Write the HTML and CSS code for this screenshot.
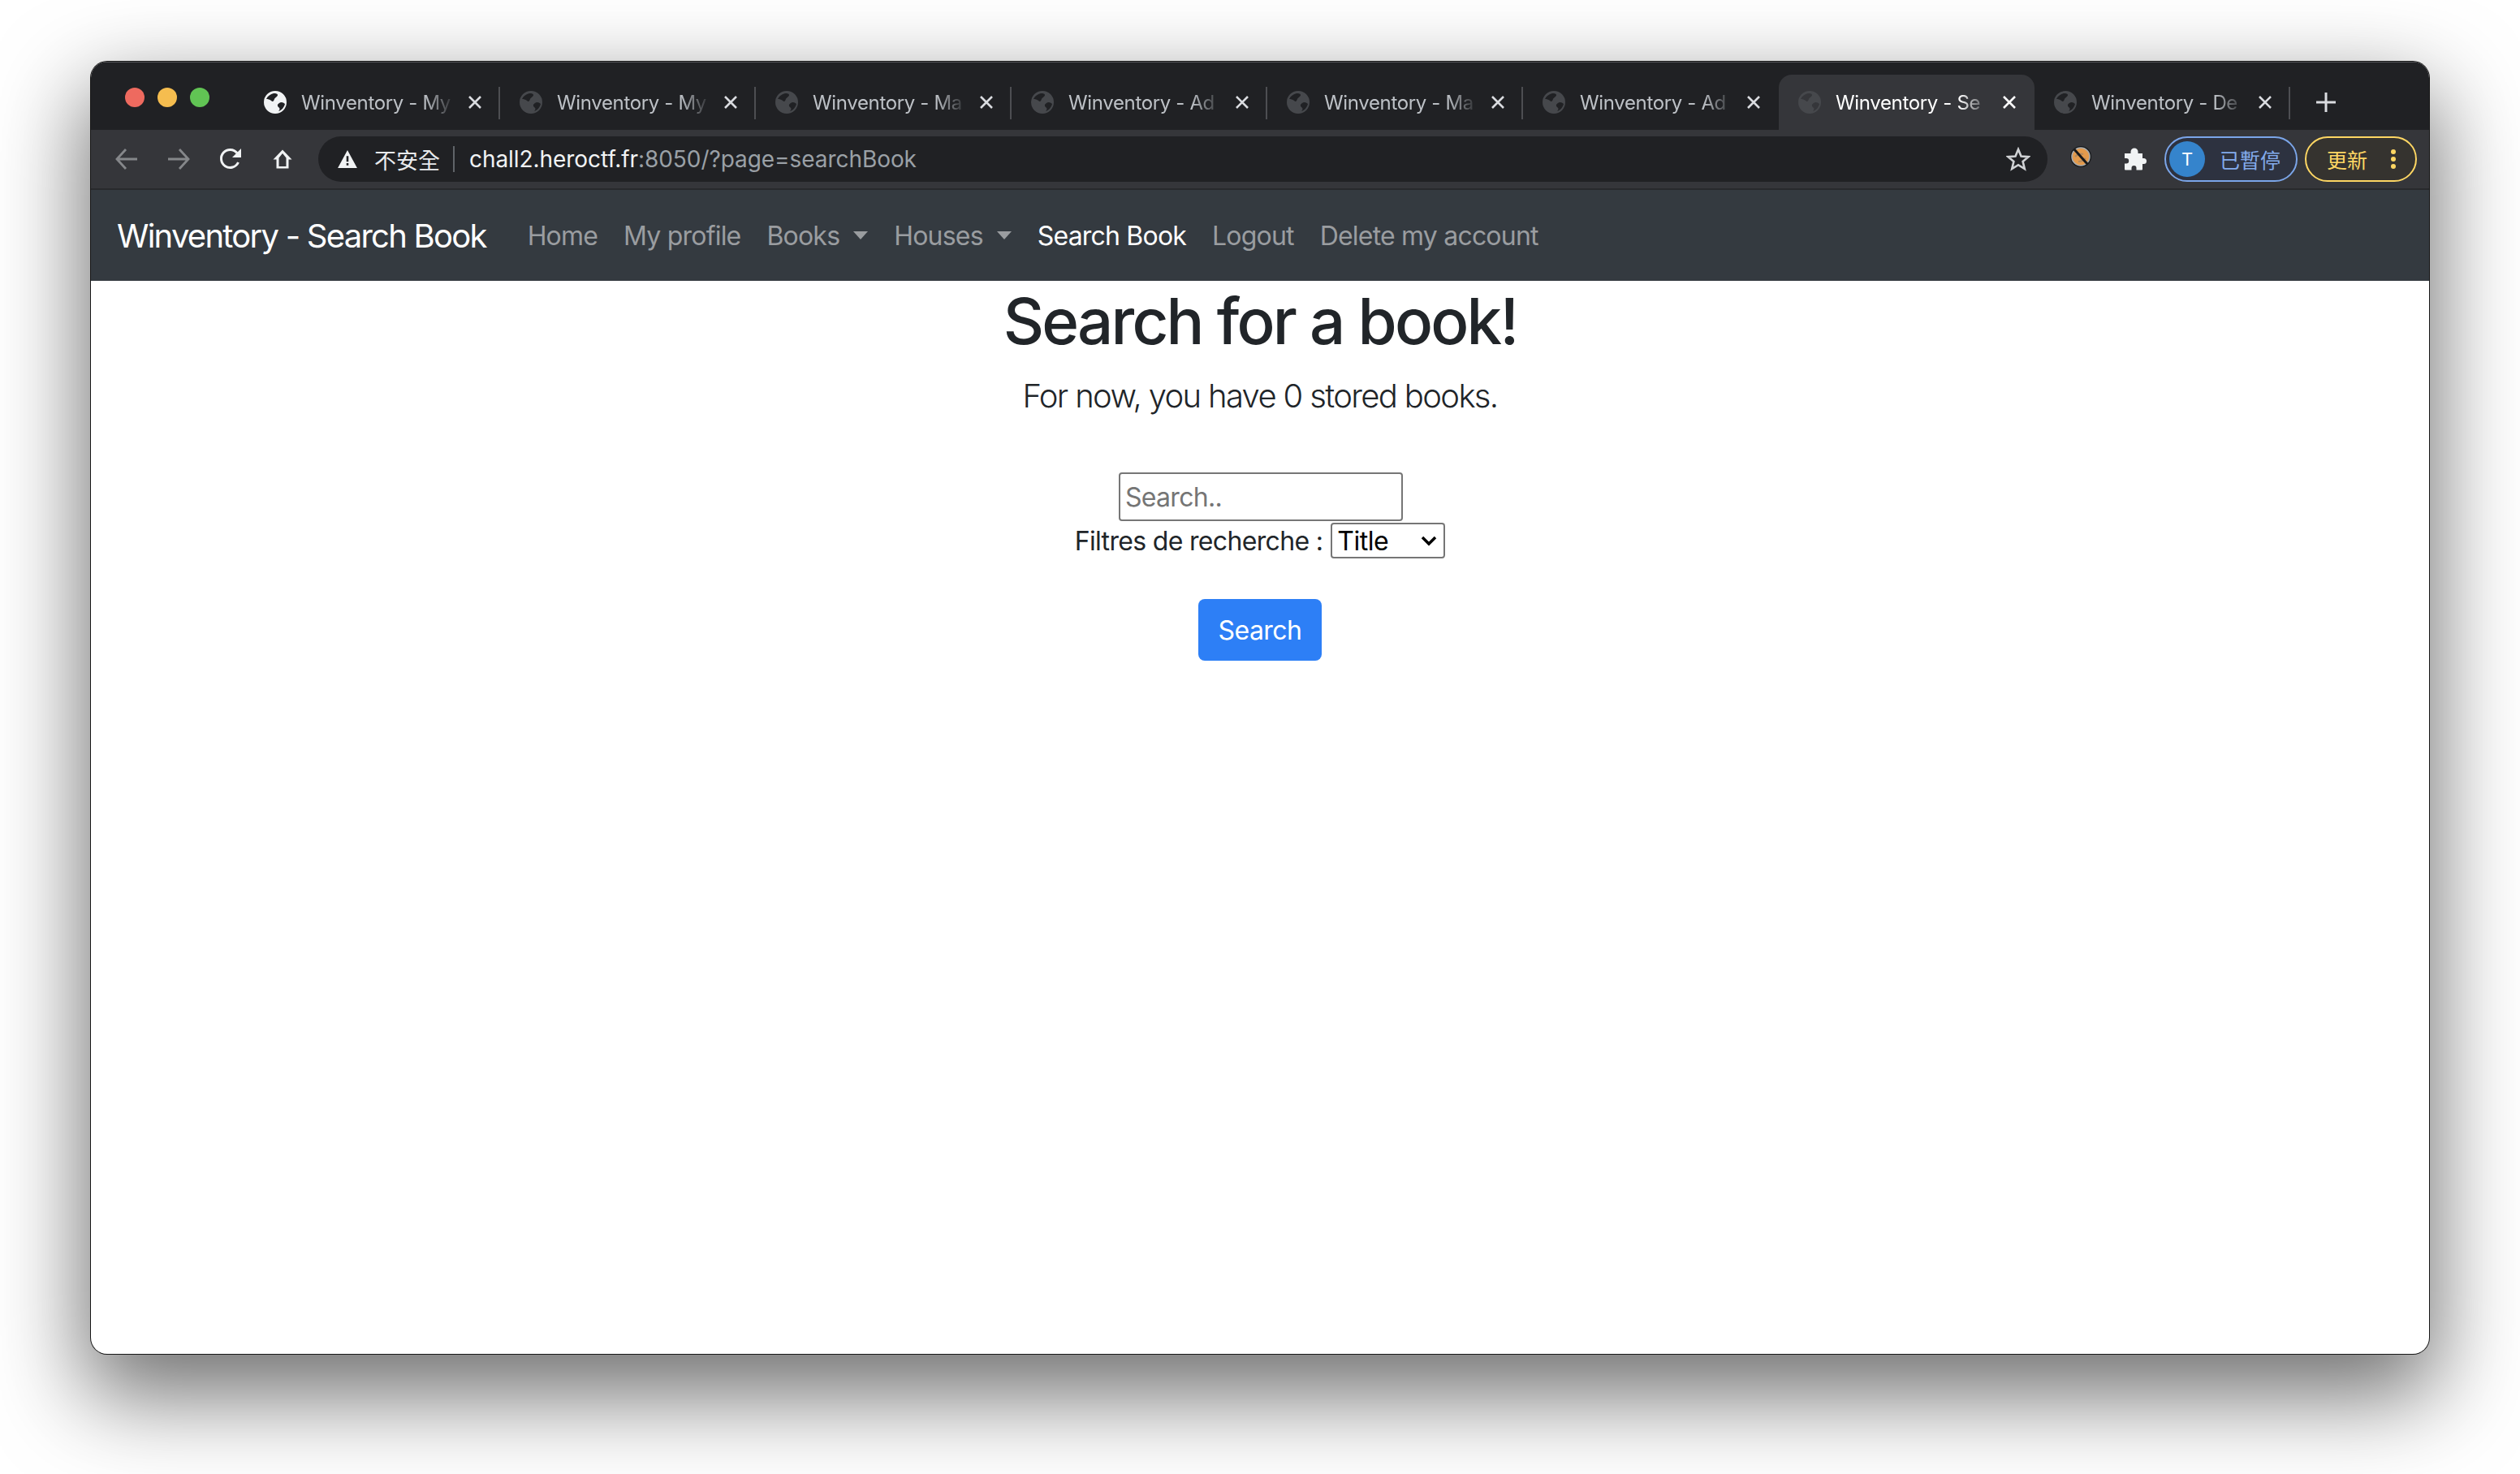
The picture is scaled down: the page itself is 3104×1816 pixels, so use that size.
FILE: index.html
```html
<!DOCTYPE html>
<html lang="en">

<head>
    <meta charset="UTF-8">
    <title>Winventory - Search Book</title>
    <link rel="stylesheet" href="styles.css">
</head>

<body>
    <svg class="defs" width="0" height="0">
        <symbol id="globe" viewBox="0 0 28 28">
            <path fill-rule="evenodd" d="M14 0a14 14 0 1 1 0 28a14 14 0 0 1 0-28zM3 10C5 6 8 4 12 3C15 3 17 3.500 17 5C17 7 14 8 13 10C12 13 11 14 9 12C7 10.500 5 10 3 10zM26 16C24 14 21 13 19 15C17 16 16 18 18 20C20 21 20 23 18 25C22 24 25 20 26 16z"/>
        </symbol>
        <symbol id="close" viewBox="0 0 16 16">
            <path d="M1 1L15 15M15 1L1 15" fill="none" stroke="currentColor" stroke-width="2.600"/>
        </symbol>
    </svg>

    <div class="window">
        <div class="tabstrip">
            <div class="lights">
                <span class="light red"></span>
                <span class="light yellow"></span>
                <span class="light green"></span>
            </div>
            <div class="tab first">
                <svg class="favicon"><use href="#globe"/></svg>
                <span class="tab-title">Winventory - My</span>
                <svg class="tab-close"><use href="#close"/></svg>
            </div>
            <div class="tab">
                <svg class="favicon"><use href="#globe"/></svg>
                <span class="tab-title">Winventory - My</span>
                <svg class="tab-close"><use href="#close"/></svg>
            </div>
            <div class="tab">
                <svg class="favicon"><use href="#globe"/></svg>
                <span class="tab-title">Winventory - Ma</span>
                <svg class="tab-close"><use href="#close"/></svg>
            </div>
            <div class="tab">
                <svg class="favicon"><use href="#globe"/></svg>
                <span class="tab-title">Winventory - Ad</span>
                <svg class="tab-close"><use href="#close"/></svg>
            </div>
            <div class="tab">
                <svg class="favicon"><use href="#globe"/></svg>
                <span class="tab-title">Winventory - Ma</span>
                <svg class="tab-close"><use href="#close"/></svg>
            </div>
            <div class="tab before-active">
                <svg class="favicon"><use href="#globe"/></svg>
                <span class="tab-title">Winventory - Ad</span>
                <svg class="tab-close"><use href="#close"/></svg>
            </div>
            <div class="tab active">
                <svg class="favicon"><use href="#globe"/></svg>
                <span class="tab-title">Winventory - Se</span>
                <svg class="tab-close"><use href="#close"/></svg>
            </div>
            <div class="tab">
                <svg class="favicon"><use href="#globe"/></svg>
                <span class="tab-title">Winventory - De</span>
                <svg class="tab-close"><use href="#close"/></svg>
            </div>
            <svg class="new-tab" viewBox="0 0 24 24">
                <path d="M12 0V24M0 12H24" fill="none" stroke="currentColor" stroke-width="3"/>
            </svg>
        </div>

        <div class="toolbar">
            <svg class="tool dim" viewBox="0 0 28 28">
                <path d="M27 14H3M13 2L2 14L13 26" fill="none" stroke="currentColor" stroke-width="2.800"/>
            </svg>
            <svg class="tool dim" viewBox="0 0 28 28">
                <path d="M1 14H25M15 2L26 14L15 26" fill="none" stroke="currentColor" stroke-width="2.800"/>
            </svg>
            <svg class="tool" viewBox="0 0 28 28">
                <path d="M23.500 18a11 11 0 1 1-1.500-11.500" fill="none" stroke="currentColor" stroke-width="3"/>
                <path d="M27 1V12H16z" fill="currentColor"/>
            </svg>
            <svg class="tool" viewBox="0 0 28 28">
                <path d="M14 2.500L2.500 14.500H6.500V25.500H21.500V14.500H25.500zM9.500 23V12.500L14 7L18.500 12.500V23z" fill="currentColor" fill-rule="evenodd"/>
            </svg>

            <div class="omnibox">
                <svg class="warn" viewBox="0 0 26 24">
                    <path fill-rule="evenodd" d="M13 0L26 24H0zM11.600 8V15.500H14.400V8zM11.600 17.500V20.500H14.400V17.500z" fill="currentColor"/>
                </svg>
                <span class="insecure">不安全</span>
                <span class="omni-sep"></span>
                <span class="url">chall2.heroctf.fr<span class="url-rest">:8050/?page=searchBook</span></span>
                <svg class="star" viewBox="0 0 30 30">
                    <path d="M15 3L18.500 11.500L27.500 12.200L20.600 18L22.800 27L15 22.200L7.200 27L9.400 18L2.500 12.200L11.500 11.500z" fill="none" stroke="currentColor" stroke-width="2.600"/>
                </svg>
            </div>

            <svg class="ext-icon" viewBox="0 0 28 28">
                <circle cx="14" cy="14" r="13" fill="#16181a"/>
                <circle cx="14" cy="14" r="11" fill="#e39a4c" stroke="#a9acae" stroke-width="1.500"/>
                <path d="M7 14c3-3 7-4 10-3M11 20c3 0 6-1 9-4" fill="none" stroke="#b08a60" stroke-width="2"/>
                <path d="M6 5L22 23" stroke="#16181a" stroke-width="3"/>
            </svg>
            <svg class="puzzle" viewBox="0 0 28 28">
                <path d="M1 7H8.500V5a4.500 4.500 0 0 1 9 0V7H23V13H24.500a3.500 3.500 0 0 1 0 7H23V26.500a1 1 0 0 1-1 1H15.500V25a3 3 0 0 0-6 0V27.500H2a1 1 0 0 1-1-1V19.500H3a3.200 3.200 0 0 0 0-6.400H1z" fill="currentColor"/>
            </svg>
            <div class="profile">
                <span class="avatar">T</span>
                <span class="profile-label">已暫停</span>
            </div>
            <div class="update">
                <span>更新</span>
                <span class="dots"><i></i><i></i><i></i></span>
            </div>
        </div>

        <nav class="navbar">
            <a class="brand">Winventory - Search Book</a>
            <a class="nav-link">Home</a>
            <a class="nav-link">My profile</a>
            <a class="nav-link caret">Books</a>
            <a class="nav-link caret">Houses</a>
            <a class="nav-link current">Search Book</a>
            <a class="nav-link">Logout</a>
            <a class="nav-link">Delete my account</a>
        </nav>

        <main class="page">
            <h1>Search for a book!</h1>
            <p class="lead">For now, you have 0 stored books.</p>
            <form class="search-form">
                <input class="search-input" type="text" placeholder="Search..">
                <div class="filter-row">
                    <label for="filter">Filtres de recherche :</label>
                    <select id="filter" class="filter">
                        <option>Title</option>
                        <option>Author</option>
                    </select>
                </div>
                <button type="button" class="btn">Search</button>
            </form>
        </main>
    </div>
</body>

</html>
```

FILE: styles.css
```css
html,
body {
    margin: 0;
    height: 100%;
    background: #fff;
    overflow: hidden;
}

body {
    padding: 76px 112px 0;
    box-sizing: border-box;
    font-family: Inter, "Noto Sans CJK TC", sans-serif;
}

.defs {
    position: absolute;
}

.window {
    width: 2880px;
    height: 1592px;
    border-radius: 20px;
    overflow: hidden;
    background: #fff;
    box-shadow: 0 0 0 1px #161616, 0 44px 110px 8px rgba(0, 0, 0, .56);
}

/* tab strip */
.tabstrip {
    height: 84px;
    box-sizing: border-box;
    background: #202124;
    border-top: 1px solid #55565a;
    display: flex;
    align-items: flex-end;
    color: #bdc1c6;
}

.lights {
    width: 189px;
    height: 100%;
    flex: none;
    display: flex;
    gap: 16px;
    padding: 31px 0 0 42px;
    box-sizing: border-box;
}

.light {
    width: 24px;
    height: 24px;
    border-radius: 50%;
}

.red {
    background: #ee6a5f;
}

.yellow {
    background: #f5bd4f;
}

.green {
    background: #61c454;
}

.tab {
    width: 315px;
    height: 68px;
    flex: none;
    box-sizing: border-box;
    padding: 0 0 0 24px;
    display: flex;
    align-items: center;
    position: relative;
    font-size: 24px;
    letter-spacing: -.35px;
}

.tab::before {
    content: "";
    position: absolute;
    right: 0;
    top: 15px;
    height: 40px;
    width: 2px;
    background: #4d4e52;
}

.tab.before-active::before,
.tab.active::before {
    display: none;
}

.favicon {
    width: 28px;
    height: 28px;
    flex: none;
    fill: #46484c;
}

.tab.first .favicon {
    fill: #f1f3f4;
}

.tab-title {
    width: 190px;
    flex: none;
    margin-left: 18px;
    white-space: nowrap;
    -webkit-mask-image: linear-gradient(to right, #000 80%, transparent 100%);
    mask-image: linear-gradient(to right, #000 80%, transparent 100%);
}

.tab-close {
    width: 16px;
    height: 16px;
    flex: none;
    margin-left: 16px;
    color: #dadce0;
}

.tab.active {
    background: #35363a;
    border-radius: 16px 16px 0 0;
    color: #fff;
}

.tab.active .tab-close {
    color: #fff;
}

.tab.active::after {
    content: "";
    position: absolute;
    left: -16px;
    right: -16px;
    bottom: 0;
    height: 16px;
    z-index: -1;
    background:
        radial-gradient(circle at 0 0, #202124 16px, #35363a 16.500px) left / 16px 16px no-repeat,
        radial-gradient(circle at 100% 0, #202124 16px, #35363a 16.500px) right / 16px 16px no-repeat;
}

.new-tab {
    width: 24px;
    height: 24px;
    flex: none;
    margin: 0 0 22px 32px;
    color: #dadce0;
}

/* toolbar */
.toolbar {
    height: 72px;
    background: #35363a;
    border-bottom: 2px solid #28292c;
    display: flex;
    align-items: center;
    position: relative;
}

.tool {
    width: 28px;
    height: 28px;
    flex: none;
    margin-left: 36px;
    color: #f1f3f4;
}

.tool:first-child {
    margin-left: 30px;
}

.tool.dim {
    color: #85878a;
}

.omnibox {
    width: 2130px;
    height: 56px;
    margin-left: 30px;
    border-radius: 28px;
    background: #202124;
    display: flex;
    align-items: center;
    color: #fff;
    flex: none;
}

.warn {
    width: 24px;
    height: 22px;
    margin-left: 24px;
    color: #f1f3f4;
}

.insecure {
    margin-left: 21px;
    font-size: 27px;
    color: #e8eaed;
}

.omni-sep {
    width: 2px;
    height: 32px;
    margin: 0 18px 0 16px;
    background: #5f6368;
}

.url {
    font-size: 28px;
    letter-spacing: -.06px;
    color: #f1f3f4;
    white-space: nowrap;
}

.url-rest {
    color: #9aa0a6;
}

.star {
    width: 30px;
    height: 30px;
    margin-left: auto;
    margin-right: 21px;
    color: #d0d2d5;
}

.ext-icon {
    width: 28px;
    height: 28px;
    flex: none;
    margin: -6px 0 0 27px;
}

.puzzle {
    width: 28px;
    height: 28px;
    flex: none;
    margin-left: 39px;
    color: #f1f3f4;
}

.profile {
    width: 164px;
    height: 56px;
    flex: none;
    margin-left: 22px;
    box-sizing: border-box;
    border: 2px solid #7ba5e8;
    border-radius: 28px;
    background: #2d3240;
    display: flex;
    align-items: center;
    padding-left: 4px;
}

.avatar {
    width: 44px;
    height: 44px;
    border-radius: 50%;
    background: #3584cc;
    color: #fff;
    font-size: 22px;
    display: flex;
    align-items: center;
    justify-content: center;
}

.profile-label {
    margin-left: 18px;
    font-size: 25px;
    color: #83abec;
    white-space: nowrap;
}

.update {
    width: 138px;
    height: 56px;
    flex: none;
    margin-left: 9px;
    box-sizing: border-box;
    border: 2px solid #fdd663;
    border-radius: 28px;
    background: #35332f;
    color: #fdd663;
    font-size: 25px;
    display: flex;
    align-items: center;
    padding-left: 25px;
}

.dots {
    margin-left: 29px;
    display: flex;
    flex-direction: column;
    gap: 3px;
}

.dots i {
    width: 6px;
    height: 6px;
    border-radius: 50%;
    background: #fdd663;
}

/* navbar */
.navbar {
    height: 112px;
    background: #343a40;
    display: flex;
    align-items: center;
    padding: 0 16px 0 32px;
    font-size: 32px;
    letter-spacing: -.8px;
}

.navbar a {
    white-space: nowrap;
}

.brand {
    font-size: 40px;
    color: #fff;
    margin-right: 35px;
    letter-spacing: -1.750px;
}

.nav-link {
    padding: 0 16px;
    color: #9a9da0;
}

.nav-link.current {
    color: #fff;
}

.caret::after {
    content: "";
    display: inline-block;
    margin-left: 17px;
    vertical-align: 7px;
    border-top: 10px solid;
    border-left: 9px solid transparent;
    border-right: 9px solid transparent;
}

/* page */
.page {
    text-align: center;
    color: #212529;
}

h1 {
    margin: 2px 0 14px;
    font-size: 78px;
    line-height: 96px;
    font-weight: 500;
    letter-spacing: -2.800px;
}

.lead {
    margin: 0 0 64px;
    font-size: 40px;
    line-height: 60px;
    font-weight: 300;
    letter-spacing: -1.650px;
}

.search-form {
    display: flex;
    flex-direction: column;
    align-items: center;
}

.search-input {
    width: 350px;
    height: 60px;
    margin-left: 2px;
    box-sizing: border-box;
    border: 2px solid #767676;
    border-radius: 4px;
    padding: 2px 6px;
    font-family: inherit;
    font-size: 32px;
    letter-spacing: -.7px;
}

.search-input::placeholder {
    color: #757575;
    opacity: 1;
}

.filter-row {
    height: 48px;
    display: flex;
    align-items: center;
    font-size: 32px;
    letter-spacing: -.67px;
}

.filter {
    width: 141px;
    height: 44px;
    margin-left: 10px;
    box-sizing: border-box;
    border: 2px solid #767676;
    border-radius: 4px;
    padding: 0 0 0 6px;
    font-family: inherit;
    font-size: 32px;
    letter-spacing: -.5px;
    color: #000;
    background: #fff url("data:image/svg+xml,%3Csvg xmlns='http://www.w3.org/2000/svg' width='20' height='14' viewBox='0 0 20 14'%3E%3Cpath d='M2 3l8 8 8-8' fill='none' stroke='%23000' stroke-width='3.500'/%3E%3C/svg%3E") no-repeat right 8px center;
    appearance: none;
    -webkit-appearance: none;
}

.btn {
    width: 152px;
    height: 76px;
    margin-top: 48px;
    border: 0;
    border-radius: 8px;
    background: #2d7ff6;
    color: #fff;
    font-family: inherit;
    font-size: 32px;
    letter-spacing: -.55px;
}
```
